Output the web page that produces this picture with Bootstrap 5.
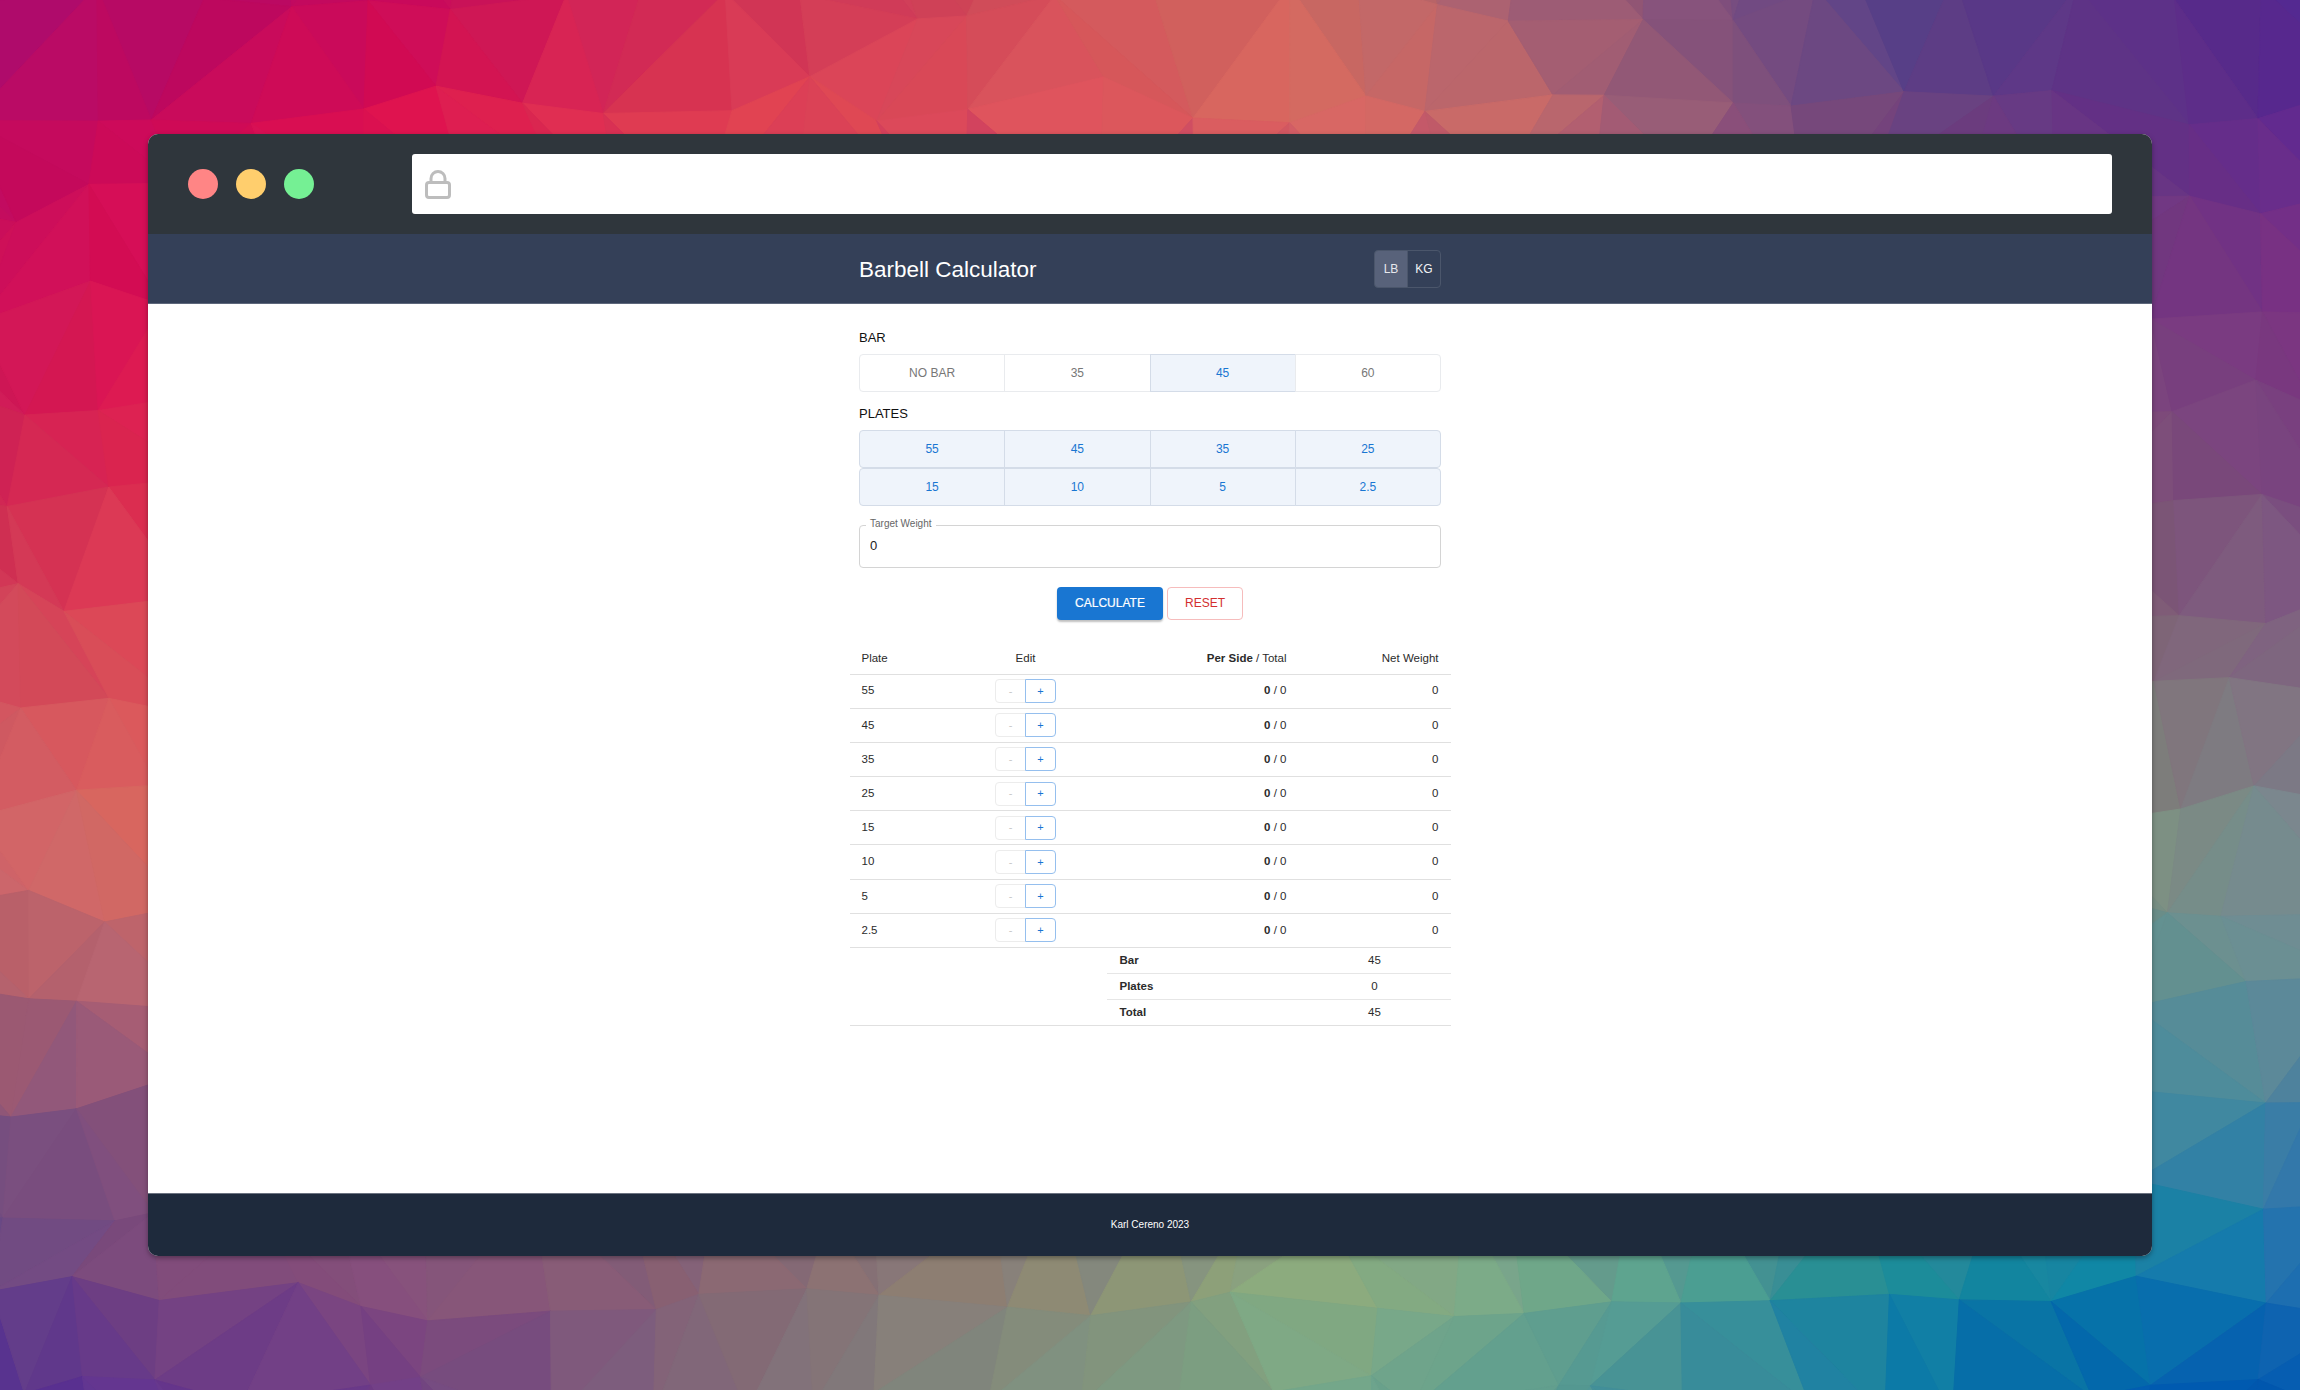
<!DOCTYPE html>
<html lang="en">
<head>
    <meta charset="UTF-8">
    <meta name="viewport" content="width=device-width, initial-scale=1.0">
    <title>Barbell Calculator</title>
    <link href="https://cdn.jsdelivr.net/npm/bootstrap@5.3.0/dist/css/bootstrap.min.css" rel="stylesheet">
    <style>
        body {
            font-family: "Liberation Sans", Arial, sans-serif;
            background: #8a5a75;
            height: 1390px;
            overflow: hidden;
            padding: 134px 148px;
            color: #2b2b2b;
        }

        #mesh { position: absolute; left: 0; top: 0; width: 2300px; height: 1390px; }

        .app-window {
            position: relative;
            height: 1122px;
            border-radius: 10px;
            overflow: hidden;
            background: #fff;
            box-shadow: 0 2px 5px rgba(0, 0, 0, .35);
        }

        .chrome-bar { height: 100px; background: #2f363c; padding: 20px 40px; }
        .dot-row { gap: 18px; }
        .dot { width: 30px; height: 30px; border-radius: 50%; }
        .dot-red { background: #ff8585; }
        .dot-yellow { background: #ffce6d; }
        .dot-green { background: #75f094; }
        .address-bar { margin-left: 98px; height: 60px; background: #fff; border-radius: 3px; padding: 16px 13px; }

        .top-nav { height: 70px; background: #344058; border-bottom: 1px solid #5d677b; }
        .inner-col { width: 582px; }
        .app-title { font-size: 22.5px; font-weight: 400; line-height: 1.2; color: #fff; margin: 2px 0 0; }
        .unit-btn {
            width: 34px; height: 38px; padding: 0; font-size: 12px;
            color: #f2f3f5; border: 1px solid #4b566b; border-radius: 4px;
        }
        .unit-btn.is-on { background: #58627a; color: #e6e8ec; }

        .app-main { flex: 1 1 auto; padding-top: 25px; }
        .field-title { font-size: 13px; line-height: 18px; color: #111; margin-bottom: 7px; }
        .plates-title { margin-top: 13px; }

        .pick-row > .pick-btn { flex: 1 1 0; }
        .pick-btn {
            height: 38px; padding: 0 0 1px; font-size: 12px; color: #777;
            border: 1px solid #e9ebee; border-radius: 4px; background: #fff;
        }
        .pick-btn.is-on { background: #eff4fb; color: #1976d2; border-color: #d4dce8; }

        .weight-box { position: relative; margin-top: 19px; }
        .weight-box label {
            position: absolute; left: 7px; top: -8px; padding: 0 4px; background: #fff;
            font-size: 10px; line-height: 13px; color: #666;
        }
        .weight-input {
            height: 43px; font-size: 13px; color: #222; padding: 0 10px 3px;
            border: 1px solid #d4d4d4; border-radius: 4px;
        }

        .action-row { margin-top: 19px; }
        .go-btn {
            width: 106px; height: 33px; padding: 0 0 2px; font-size: 12px; color: #fff;
            background: #1976d2; border: 0; border-radius: 4px;
            box-shadow: 0 2px 2px rgba(0, 0, 0, .25);
            -webkit-text-stroke: .2px #fff;
        }
        .clear-btn {
            width: 76px; height: 33px; padding: 0 0 2px; font-size: 12px; color: #d32f2f;
            background: #fff; border: 1px solid #f6bcbc; border-radius: 4px;
        }

        .table-wrap { width: 601px; margin-top: 22px; border-bottom: 1px solid #e0e0e0; }
        .lift-table.table { font-size: 11.5px; color: #2b2b2b; table-layout: fixed; margin: 0; --bs-table-border-color: #e0e0e0; }
        .lift-table.table > :not(caption) > * > * { padding: 0 12px; vertical-align: middle; border-bottom-width: 1px; }
        .lift-table.table > thead > tr > th { padding-top: 2px; }
        .lift-table thead tr { height: 32px; }
        .lift-table tbody tr { height: 34.2px; }
        .col-plate { width: 100px; }
        .col-edit { width: 152px; }
        .col-side { width: 197px; }
        .col-net { width: 152px; }

        .step-btn {
            width: 31px; height: 24px; padding: 0; font-size: 11px; line-height: 1;
            border-radius: 4px; background: #fff;
        }
        .step-minus { color: #c8c8c8; border: 1px solid #ececec; }
        .step-plus { color: #1976d2; border: 1px solid #95bfee; z-index: 1; }

        .sum-table.table { width: 344px; font-size: 11.5px; color: #2b2b2b; table-layout: fixed; margin: 0 0 0 auto; --bs-table-border-color: #e6e6e6; }
        .sum-table.table > :not(caption) > * > * { padding: 0 13px; vertical-align: middle; }
        .sum-table tr { height: 25.7px; }
        .sum-table tr:last-child > * { border-bottom: 0; }
        .sum-name { width: 192px; font-weight: 700; }

        .app-foot {
            height: 63px; background: #1e2a3c; border-top: 1px solid #6b7280;
            color: #fff; font-size: 10px; padding-bottom: 2px;
        }
    </style>
</head>
<body>
    <svg id="mesh" viewBox="0 0 2300 1390" aria-hidden="true"></svg>

    <div class="app-window d-flex flex-column">
        <div class="chrome-bar d-flex align-items-center flex-shrink-0">
            <div class="dot-row d-flex">
                <span class="dot dot-red"></span>
                <span class="dot dot-yellow"></span>
                <span class="dot dot-green"></span>
            </div>
            <div class="address-bar flex-grow-1 d-flex">
                <svg width="26" height="29" viewBox="0 0 26 29" fill="none" stroke="#bdbdbd" stroke-width="3">
                    <rect x="1.5" y="12.5" width="23" height="15" rx="2.5"/>
                    <path d="M6 12V8.5a7 7 0 0 1 14 0V12"/>
                </svg>
            </div>
        </div>

        <nav class="top-nav d-flex justify-content-center flex-shrink-0">
            <div class="inner-col d-flex align-items-center justify-content-between">
                <h1 class="app-title">Barbell Calculator</h1>
                <div class="btn-group">
                    <button type="button" class="btn unit-btn is-on">LB</button>
                    <button type="button" class="btn unit-btn">KG</button>
                </div>
            </div>
        </nav>

        <main class="app-main d-flex flex-column align-items-center">
            <div class="inner-col">
                <div class="field-title">BAR</div>
                <div class="btn-group pick-row d-flex">
                    <button type="button" class="btn pick-btn">NO BAR</button>
                    <button type="button" class="btn pick-btn">35</button>
                    <button type="button" class="btn pick-btn is-on">45</button>
                    <button type="button" class="btn pick-btn">60</button>
                </div>

                <div class="field-title plates-title">PLATES</div>
                <div class="btn-group pick-row d-flex">
                    <button type="button" class="btn pick-btn is-on">55</button>
                    <button type="button" class="btn pick-btn is-on">45</button>
                    <button type="button" class="btn pick-btn is-on">35</button>
                    <button type="button" class="btn pick-btn is-on">25</button>
                </div>
                <div class="btn-group pick-row d-flex">
                    <button type="button" class="btn pick-btn is-on">15</button>
                    <button type="button" class="btn pick-btn is-on">10</button>
                    <button type="button" class="btn pick-btn is-on">5</button>
                    <button type="button" class="btn pick-btn is-on">2.5</button>
                </div>

                <div class="weight-box">
                    <label for="target">Target Weight</label>
                    <input id="target" type="text" class="form-control weight-input" value="0">
                </div>

                <div class="action-row d-flex justify-content-center gap-1">
                    <button type="button" class="btn go-btn">CALCULATE</button>
                    <button type="button" class="btn clear-btn">RESET</button>
                </div>
            </div>

            <div class="table-wrap">
                <table class="table lift-table">
                    <colgroup>
                        <col class="col-plate"><col class="col-edit"><col class="col-side"><col class="col-net">
                    </colgroup>
                    <thead>
                        <tr>
                            <th class="fw-normal">Plate</th>
                            <th class="fw-normal text-center">Edit</th>
                            <th class="fw-normal text-end"><b>Per Side</b> / Total</th>
                            <th class="fw-normal text-end">Net Weight</th>
                        </tr>
                    </thead>
                    <tbody id="plateRows"></tbody>
                </table>
                <table class="table sum-table">
                    <tbody>
                        <tr><td class="sum-name">Bar</td><td class="text-center">45</td></tr>
                        <tr><td class="sum-name">Plates</td><td class="text-center">0</td></tr>
                        <tr><td class="sum-name">Total</td><td class="text-center">45</td></tr>
                    </tbody>
                </table>
            </div>
        </main>

        <footer class="app-foot d-flex align-items-center justify-content-center flex-shrink-0">Karl Cereno 2023</footer>
    </div>

    <script>
        // table rows
        const plates = ["55", "45", "35", "25", "15", "10", "5", "2.5"];
        document.getElementById("plateRows").innerHTML = plates.map(p => `
            <tr>
                <td>${p}</td>
                <td class="text-center">
                    <div class="btn-group">
                        <button type="button" class="btn step-btn step-minus">-</button>
                        <button type="button" class="btn step-btn step-plus">+</button>
                    </div>
                </td>
                <td class="text-end"><b>0</b> / 0</td>
                <td class="text-end">0</td>
            </tr>`).join("");

        // low poly wallpaper: jittered grid, flat colour from a table of samples
        const xs = [0, 150, 400, 700, 1000, 1300, 1500, 1700, 1900, 2150, 2300];
        const edgeRows = {
            300: ["#cf1058", "#dc1052", "#763a80", "#7a3080"],
            500: ["#d02c52", "#dd2a50", "#7c5078", "#7a4880"],
            700: ["#d2505c", "#da5258", "#807078", "#807080"],
            850: ["#cf666a", "#d96a60", "#7c8f82", "#7a8a90"],
            975: ["#b0606c", "#b86470", "#5f9090", "#6a8f95"],
            1130: ["#7a5080", "#84507a", "#3f8a9f", "#3a7aa5"]
        };
        const grid = [
            [0, ["#a50a70", "#b00a68", "#c8085a", "#d02c58", "#d04a58", "#cc6a60", "#a86070", "#804f7c", "#55408a", "#5a3088", "#502890"]],
            [130, ["#c00a60", "#cb0858", "#e0104f", "#e0404f", "#e0505a", "#e06a60", "#c86a68", "#905a78", "#6a4480", "#622f85", "#622a90"]]
        ];
        const hex = c => [1, 3, 5].map(i => parseInt(c.substr(i, 2), 16));
        Object.keys(edgeRows).forEach(y => {
            const e = edgeRows[y];
            const row = xs.map(x => {
                if (x <= 150) return e[x ? 1 : 0];
                if (x >= 2150) return e[x > 2150 ? 3 : 2];
                const t = (x - 150) / 2000, a = hex(e[1]), b = hex(e[2]);
                return "#" + a.map((v, i) => Math.round(v + (b[i] - v) * t).toString(16).padStart(2, "0")).join("");
            });
            grid.push([+y, row]);
        });
        grid.push([1260, ["#6a4a85", "#7e4a7a", "#88507a", "#8a6472", "#8f8272", "#90ac7c", "#7fad88", "#50a090", "#1a8a98", "#0a85a8", "#2070b0"]]);
        grid.push([1390, ["#552f95", "#63358f", "#703c85", "#80687a", "#7f8d80", "#78a888", "#5f9e90", "#3a8a9a", "#0a78a8", "#005ab0", "#0058b0"]]);
        const table = grid.map(r => [r[0], r[1].map(hex)]);

        function seg(list, v) {
            let i = 0;
            while (i < list.length - 2 && v > list[i + 1]) i++;
            return [i, Math.min(1, Math.max(0, (v - list[i]) / (list[i + 1] - list[i])))];
        }
        function sample(x, y) {
            const [cx, tx] = seg(xs, x);
            const [ry, ty] = seg(table.map(r => r[0]), y);
            return [0, 1, 2].map(k => {
                const top = table[ry][1][cx][k] * (1 - tx) + table[ry][1][cx + 1][k] * tx;
                const bot = table[ry + 1][1][cx][k] * (1 - tx) + table[ry + 1][1][cx + 1][k] * tx;
                return top * (1 - ty) + bot * ty;
            });
        }

        let seed = 7;
        const rnd = () => (seed = (seed * 16807) % 2147483647) / 2147483647;
        const stepX = 90, stepY = 100, pts = [];
        for (let r = 0; r <= 16; r++) {
            pts.push([]);
            for (let c = 0; c <= 28; c++) {
                pts[r].push([(c - 1) * stepX + (rnd() - .5) * 60, (r - 1) * stepY + (rnd() - .5) * 50]);
            }
        }
        let out = "";
        function tri(a, b, d) {
            const x = Math.min(2300, Math.max(0, (a[0] + b[0] + d[0]) / 3));
            const y = Math.min(1390, Math.max(0, (a[1] + b[1] + d[1]) / 3));
            const j = (rnd() - .5) * 4;
            const fill = `rgb(${sample(x, y).map(v => Math.round(Math.min(255, Math.max(0, v + j)))).join(",")})`;
            out += `<polygon points="${a} ${b} ${d}" fill="${fill}" stroke="${fill}"/>`;
        }
        for (let r = 0; r < 16; r++) {
            for (let c = 0; c < 28; c++) {
                const a = pts[r][c], b = pts[r][c + 1], d = pts[r + 1][c], e = pts[r + 1][c + 1];
                if (rnd() > .5) { tri(a, b, d); tri(b, e, d); }
                else { tri(a, b, e); tri(a, e, d); }
            }
        }
        document.getElementById("mesh").innerHTML = out;
    </script>

    <script src="https://cdn.jsdelivr.net/npm/bootstrap@5.3.0/dist/js/bootstrap.bundle.min.js"></script>
</body>
</html>
